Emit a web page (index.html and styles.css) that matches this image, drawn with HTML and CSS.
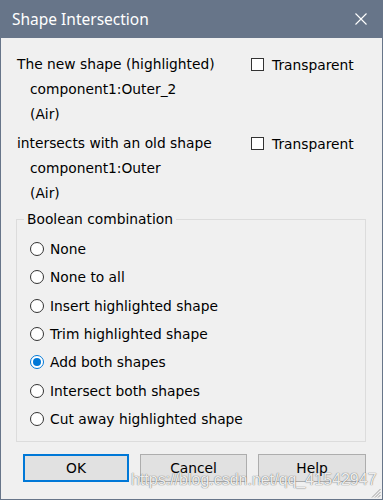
FILE: index.html
```html
<!DOCTYPE html>
<html>
<head>
<meta charset="utf-8">
<link rel="stylesheet" href="styles.css">
</head>
<body>
<div class="window">
  <div class="titlebar">
    <span class="title">Shape Intersection</span>
    <svg class="close" width="12" height="12" viewBox="0 0 12 12"><path d="M0.5 0.5 L11.5 11.5 M11.5 0.5 L0.5 11.5" stroke="#fff" stroke-width="1.1" fill="none"/></svg>
  </div>
  <div class="content">
    <div class="shapes">
      <div class="line">The new shape (highlighted)</div>
      <label class="check"><span class="box"></span>Transparent</label>
      <div class="line indent">component1:Outer_2</div>
      <div></div>
      <div class="line indent">(Air)</div>
      <div></div>
      <div class="line gap">intersects with an old shape</div>
      <label class="check gap"><span class="box"></span>Transparent</label>
      <div class="line indent">component1:Outer</div>
      <div></div>
      <div class="line indent">(Air)</div>
      <div></div>
    </div>
    <fieldset class="group">
      <legend>Boolean combination</legend>
      <label class="radio"><span class="dot"></span>None</label>
      <label class="radio"><span class="dot"></span>None to all</label>
      <label class="radio"><span class="dot"></span>Insert highlighted shape</label>
      <label class="radio"><span class="dot"></span>Trim highlighted shape</label>
      <label class="radio"><span class="dot on"></span>Add both shapes</label>
      <label class="radio"><span class="dot"></span>Intersect both shapes</label>
      <label class="radio"><span class="dot"></span>Cut away highlighted shape</label>
    </fieldset>
    <div class="buttons">
      <div class="btn default">OK</div>
      <div class="btn">Cancel</div>
      <div class="btn">Help</div>
    </div>
  </div>
  <svg class="grip" width="10" height="10" viewBox="0 0 10 10"><path d="M9.5 1 L1 9.5 M9.5 4 L4 9.5 M9.5 7 L7 9.5" stroke="#a0a0a0" stroke-width="1" fill="none"/></svg>
  <div class="watermark">https://blog.csdn.net/qq_41542947</div>
</div>
</body>
</html>
```
FILE: styles.css
```css
html, body {
  margin: 0;
  padding: 0;
  background: #f0f0f0;
}

.window {
  position: relative;
  width: 383px;
  height: 500px;
  box-sizing: border-box;
  border: 1px solid #677589;
  border-top: none;
  background: #f0f0f0;
  font-family: "DejaVu Sans", "Liberation Sans", sans-serif;
  font-size: 13.8px;
  color: #000;
  overflow: hidden;
}

.titlebar {
  height: 38px;
  margin: 0 -1px;
  background: #677589;
  display: flex;
  align-items: center;
  justify-content: space-between;
  padding: 0 16px 0 12px;
}

.title {
  font-family: "Noto Sans", "Open Sans", sans-serif;
  font-size: 15.5px;
  color: #fff;
  line-height: 20px;
}

.close {
  display: block;
}

.content {
  padding: 14px 15px 0 15px;
}

.shapes {
  display: grid;
  grid-template-columns: 234px auto;
  padding-left: 1px;
}

.line {
  height: 25px;
  line-height: 25px;
  white-space: nowrap;
}

.indent {
  padding-left: 13px;
}

.gap {
  margin-top: 4px;
}

.check {
  display: flex;
  align-items: center;
  height: 25px;
  white-space: nowrap;
}

.box {
  width: 13px;
  height: 13px;
  box-sizing: border-box;
  border: 1px solid #333;
  background: #fff;
  margin-right: 8px;
}

.group {
  margin: 5px 1px 0 0;
  padding: 8px 0 8px 13px;
  border: 1px solid #dcdcdc;
  min-width: 0;
}

.group legend {
  padding: 0 3px;
  margin-left: -6px;
  line-height: 16px;
}

.radio {
  display: flex;
  align-items: center;
  height: 28.3px;
  white-space: nowrap;
}

.dot {
  width: 14px;
  height: 14px;
  box-sizing: border-box;
  border: 1px solid #333;
  border-radius: 50%;
  background: #fff;
  margin-right: 6px;
  display: flex;
  align-items: center;
  justify-content: center;
}

.dot.on {
  border-color: #0078d7;
}

.dot.on::after {
  content: "";
  width: 8px;
  height: 8px;
  border-radius: 50%;
  background: #0078d7;
}

.buttons {
  display: grid;
  grid-template-columns: 106px 107px 108px;
  column-gap: 11px;
  margin-top: 12px;
  padding-left: 7px;
}

.btn {
  height: 28px;
  box-sizing: border-box;
  border: 1px solid #adadad;
  background: #e1e1e1;
  display: flex;
  align-items: center;
  justify-content: center;
}

.btn.default {
  border: 2px solid #0078d7;
}

.grip {
  position: absolute;
  right: 1px;
  bottom: 1px;
}

.watermark {
  position: absolute;
  left: 130px;
  top: 471px;
  font-family: "Liberation Sans", Arial, sans-serif;
  font-size: 16px;
  line-height: 18px;
  color: rgba(255, 255, 255, 0.9);
  text-shadow: 0 0 1px rgba(90, 90, 90, 0.8), 0 0 1px rgba(90, 90, 90, 0.6);
  white-space: nowrap;
}
```
